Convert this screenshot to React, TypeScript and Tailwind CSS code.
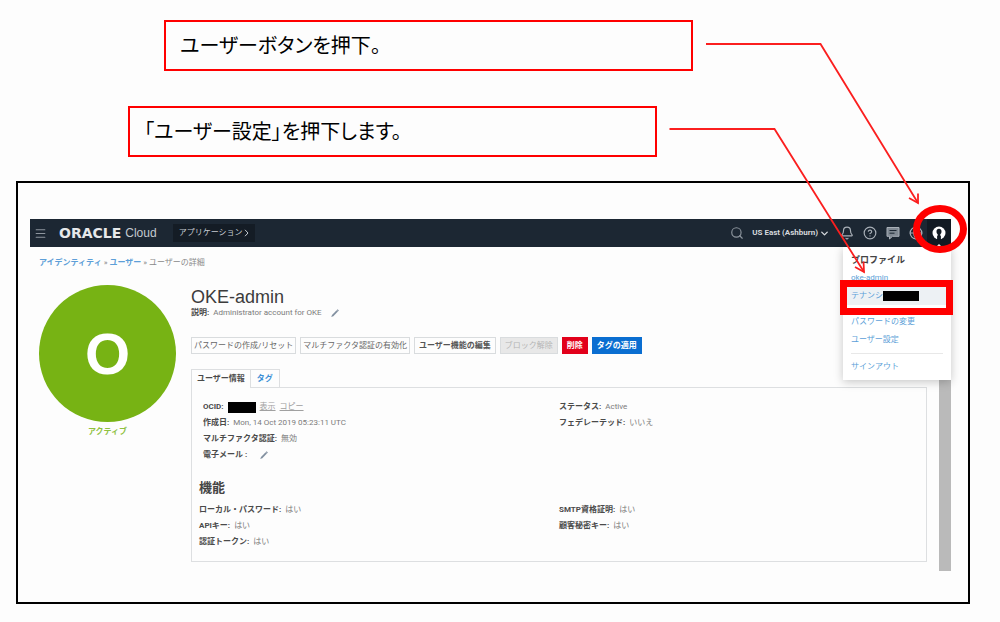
import React from "react";
import { Bell, ChevronDown, CircleHelp, Globe, Menu, Search } from "lucide-react";

function Callout({ className, children }: { className: string; children: React.ReactNode }) {
  return (
    <p
      className={`flex h-[51px] items-center border-2 border-[#ff0000] px-3.5 pb-0.5 text-xl leading-6 text-black [font-feature-settings:'palt'] ${className}`}
    >
      {children}
    </p>
  );
}

function Pencil() {
  return (
    <svg viewBox="0 0 10 10" className="h-2.5 w-2.5" aria-hidden="true">
      <path d="M1.2 9 2 6.9 7.6 1.3 8.9 2.6 3.3 8.2Z" fill="#8290a0" />
      <path d="M6.7 2.2 8 3.5" stroke="#fff" strokeWidth="0.5" />
    </svg>
  );
}

function ChatIcon() {
  return (
    <svg viewBox="0 0 14 14" className="h-3.5 w-3.5" aria-hidden="true">
      <path d="M1 1.500H13V10.300H6.500L3.500 13V10.300H1Z" fill="#7f8892" stroke="#a9b0b8" />
      <path d="M3.500 4.500H10.500M3.500 7.200H8.500" stroke="#1c2733" />
    </svg>
  );
}

function Redacted({ className }: { className: string }) {
  return <span className={`inline-block bg-black ${className}`} />;
}

function Field({ label, children }: { label: string; children?: React.ReactNode }) {
  return (
    <div className="flex items-center gap-1">
      <dt className="font-bold text-[#4a4a4a]">{label}</dt>
      <dd className="flex items-center gap-1 text-[#7b7b7b]">{children}</dd>
    </div>
  );
}

function ActionButton({ className, children, disabled }: { className: string; children: string; disabled?: boolean }) {
  return (
    <button disabled={disabled} className={`h-[17px] whitespace-nowrap border leading-[15px] ${className}`}>
      {children}
    </button>
  );
}

function TopBar() {
  return (
    <header className="flex h-7 items-center bg-[#1c2733] text-[#c5cad0]">
      <button aria-label="メニュー" className="ml-1">
        <Menu size={13} strokeWidth={2} className="text-[#8d959e]" />
      </button>
      <div className="ml-3 flex items-center gap-1 leading-4">
        <span className="font-['DejaVu_Sans',sans-serif] text-sm leading-4 font-bold text-[#e6e8ea]">ORACLE</span>
        <span className="font-['Liberation_Sans',sans-serif] text-xs leading-4 text-[#c5cad0]">Cloud</span>
      </div>
      <button className="ml-4 flex h-[18px] items-center gap-0.5 bg-[#141c25] px-1.5">
        アプリケーション
        <svg viewBox="0 0 5 8" className="h-2 w-[5px]" aria-hidden="true">
          <path d="M1 .8 4 4 1 7.2" fill="none" stroke="currentColor" />
        </svg>
      </button>
      <div className="ml-auto flex h-full items-center">
        <button aria-label="検索">
          <Search size={14} strokeWidth={2} className="text-[#8d959e]" />
        </button>
        <button className="ml-2 flex items-center gap-px font-bold text-[#d5d8dc]">
          US East (Ashburn)
          <ChevronDown size={11} strokeWidth={3} />
        </button>
        <div className="ml-2.5 flex items-center gap-[9px] text-[#a9b0b8]">
          <button aria-label="お知らせ"><Bell size={14} strokeWidth={2} /></button>
          <button aria-label="ヘルプ"><CircleHelp size={14} strokeWidth={2} /></button>
          <button aria-label="チャット"><ChatIcon /></button>
          <button aria-label="言語"><Globe size={14} strokeWidth={2} /></button>
        </div>
        <button aria-label="プロファイル" className="ml-1 flex h-full w-6 flex-col items-center justify-end bg-[#121a23]">
          <svg viewBox="0 0 14 22" className="h-[22px] w-3.5" aria-hidden="true">
            <circle cx="7" cy="8" r="6.500" fill="#fff" />
            <path d="M7 3.800c1.600 0 2.500 1.100 2.500 2.700 0 1.300-.5 2.200-1.200 2.700v1.300l.6.5V15H5.100V11l.6-.5V9.200C5 8.700 4.500 7.800 4.500 6.500 4.500 4.900 5.400 3.800 7 3.800Z" fill="#121a23" />
            <path d="M4 22 7 19 10 22Z" fill="#fff" />
          </svg>
        </button>
      </div>
    </header>
  );
}

function ProfileMenu() {
  return (
    <nav className="absolute top-7 right-0 flex h-[133px] w-[108px] flex-col bg-white pt-1 text-[#5d9fd8] shadow-[0_2px_9px_rgba(0,0,0,0.22)]">
      <h2 className="px-2 text-[9px] leading-[18px] font-bold text-[#444]">プロファイル</h2>
      <a href="#me" className="px-2 leading-[18px]">oke-admin</a>
      <a href="#tenancy" className="flex h-[18px] items-center bg-[#edf1f4] px-2 leading-[18px]">
        テナンシ
        <Redacted className="h-2.5 w-9" />
      </a>
      <a href="#password" className="mt-2 px-2 leading-[18px]">パスワードの変更</a>
      <a href="#settings" className="px-2 leading-[18px]">ユーザー設定</a>
      <hr className="mx-2 mt-1 border-[#e8e8e8]" />
      <a href="#signout" className="mt-1 px-2 leading-[18px]">サインアウト</a>
    </nav>
  );
}

function Console() {
  return (
    <div className="relative font-['Roboto','Noto_Sans_CJK_JP',sans-serif] text-[8px] leading-4">
      <TopBar />
      <div className="flex">
        <div className="min-w-0 flex-1 pt-2 pr-3 pb-[9px] pl-[9px]">
          <nav className="flex gap-0.5 text-[#8a8a8a]">
            <a href="#identity" className="font-bold text-[#5d9fd8]">アイデンティティ</a>
            <span>»</span>
            <a href="#users" className="font-bold text-[#5d9fd8]">ユーザー</a>
            <span>»</span>
            <span>ユーザーの詳細</span>
          </nav>
          <div className="mt-3.5 flex gap-[15px]">
            <div className="flex w-[137px] shrink-0 flex-col items-center gap-0.5">
              <div className="flex aspect-square w-full items-center justify-center rounded-full bg-[#77b314] font-['Liberation_Sans',sans-serif] text-[58px] leading-none font-bold text-white">
                O
              </div>
              <span className="font-bold text-[#8fc13f]">アクティブ</span>
            </div>
            <main className="min-w-0 flex-1 pt-0.5">
              <h1 className="font-['Liberation_Sans',sans-serif] text-lg leading-5 text-[#3c3c3c]">OKE-admin</h1>
              <p className="flex items-center gap-1 leading-3 text-[#7b7b7b]">
                <b className="text-[#4a4a4a]">説明:</b> Administrator account for OKE
                <button aria-label="説明の編集" className="ml-1"><Pencil /></button>
              </p>
              <div className="mt-[18px] flex gap-1">
                <ActionButton className="border-[#d9dcde] bg-[#fdfdfd] px-0.5 text-[#666]">パスワードの作成/リセット</ActionButton>
                <ActionButton className="border-[#d9dcde] bg-[#fdfdfd] px-0.5 text-[#666]">マルチファクタ認証の有効化</ActionButton>
                <ActionButton className="border-[#d9dcde] bg-[#fdfdfd] px-1 font-bold text-[#555]">ユーザー機能の編集</ActionButton>
                <ActionButton disabled className="border-[#d9dcde] bg-[#e8e8e8] px-1 text-[#b5b5b5]">ブロック解除</ActionButton>
                <ActionButton className="border-[#e2001a] bg-[#e2001a] px-1 font-bold text-white">削除</ActionButton>
                <ActionButton className="border-[#0a6ed1] bg-[#0a6ed1] px-1 font-bold text-white">タグの適用</ActionButton>
              </div>
              <div role="tablist" className="-mb-px mt-[15px] flex h-[19px]">
                <button role="tab" aria-selected="true" className="border border-b-0 border-[#dddfe1] bg-[#fdfdfd] px-[5px] font-bold text-[#4a4a4a]">
                  ユーザー情報
                </button>
                <button role="tab" aria-selected="false" className="border border-l-0 border-[#dddfe1] px-1.5 font-bold text-[#3b8fd6]">
                  タグ
                </button>
              </div>
              <section className="border border-[#dddfe1] px-[7px] pt-[11px] pb-[11px]">
                <dl className="grid grid-cols-2">
                  <div className="pl-1">
                    <Field label="OCID:">
                      <Redacted className="h-[11px] w-7" />
                      <a href="#show" className="text-[#a0a0a0] underline">表示</a>
                      <a href="#copy" className="text-[#a0a0a0] underline">コピー</a>
                    </Field>
                    <Field label="作成日:">Mon, 14 Oct 2019 05:23:11 UTC</Field>
                    <Field label="マルチファクタ認証:">無効</Field>
                    <Field label="電子メール :">
                      <button aria-label="電子メールの編集" className="ml-2"><Pencil /></button>
                    </Field>
                  </div>
                  <div>
                    <Field label="ステータス:">Active</Field>
                    <Field label="フェデレーテッド:">いいえ</Field>
                  </div>
                </dl>
                <h2 className="mt-[17px] text-[13px] leading-4 font-bold text-[#444]">機能</h2>
                <dl className="mt-1.5 grid grid-cols-2">
                  <div>
                    <Field label="ローカル・パスワード:">はい</Field>
                    <Field label="APIキー:">はい</Field>
                    <Field label="認証トークン:">はい</Field>
                  </div>
                  <div>
                    <Field label="SMTP資格証明:">はい</Field>
                    <Field label="顧客秘密キー:">はい</Field>
                  </div>
                </dl>
              </section>
            </main>
          </div>
        </div>
        <div className="w-3 shrink-0 bg-[#bababa]" />
      </div>
      <ProfileMenu />
      <div className="absolute top-[61px] -right-0.5 h-[35px] w-[113px] border-[7px] border-[#ff0000]" />
      <div className="absolute -top-3.5 -right-4 h-12 w-[54px] rounded-[50%] border-[7px] border-[#ff0000]" />
    </div>
  );
}

export default function App() {
  return (
    <div className="relative min-h-screen bg-[#fdfdfd] pt-5 pb-[18px] font-['Noto_Sans_CJK_JP',sans-serif]">
      <Callout className="mr-[307px] ml-[164px]">ユーザーボタンを押下。</Callout>
      <Callout className="mt-[35px] mr-[343px] ml-32">「ユーザー設定」を押下します。</Callout>
      <div className="mt-6 mr-[30px] ml-4 border-2 border-black pt-9 pr-[17px] pb-[31px] pl-3">
        <Console />
      </div>
      <svg viewBox="0 0 340 280" className="pointer-events-none absolute top-0 right-0 h-[280px] w-[340px]" aria-hidden="true">
        <g fill="none" stroke="#fb1f1f" strokeWidth="1.8">
          <path d="M46 44H160.500L258 203" />
          <path d="M249 198 258 203 258 193.500" />
          <path d="M9.500 129H114.500L204 272" />
          <path d="M195 267 204 272 203.500 261.500" />
        </g>
      </svg>
    </div>
  );
}
